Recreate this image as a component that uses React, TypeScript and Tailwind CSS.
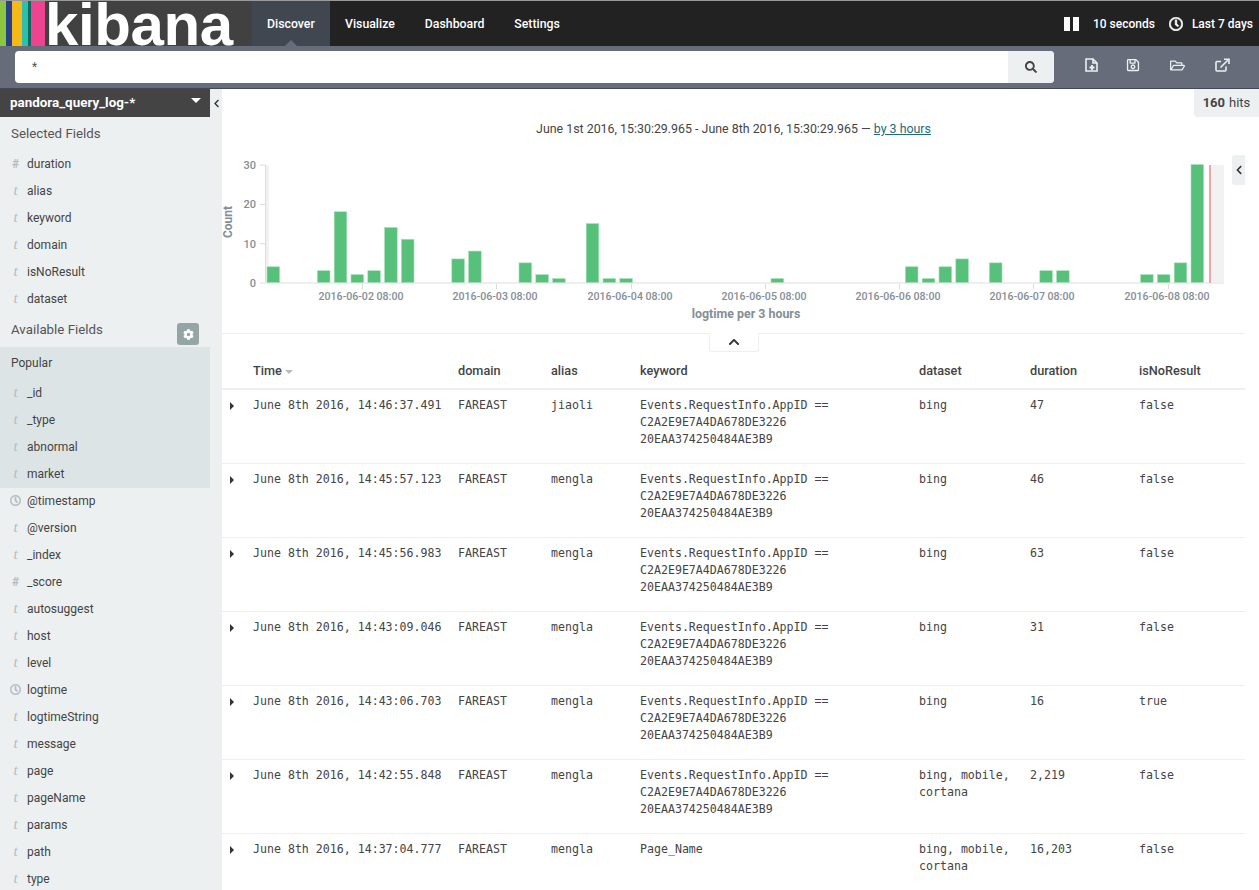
import React from 'react';
import {
  FaChevronLeft,
  FaChevronUp,
  FaCog,
  FaRegClock,
  FaRegFolderOpen,
  FaRegSave,
  FaSearch,
} from 'react-icons/fa';

const KEY = ['Events.RequestInfo.AppID ==', 'C2A2E9E7A4DA678DE3226', '20EAA374250484AE3B9'];

const rows = [
  { time: 'June 8th 2016, 14:46:37.491', alias: 'jiaoli', keyword: KEY, dataset: ['bing'], duration: '47', none: 'false' },
  { time: 'June 8th 2016, 14:45:57.123', alias: 'mengla', keyword: KEY, dataset: ['bing'], duration: '46', none: 'false' },
  { time: 'June 8th 2016, 14:45:56.983', alias: 'mengla', keyword: KEY, dataset: ['bing'], duration: '63', none: 'false' },
  { time: 'June 8th 2016, 14:43:09.046', alias: 'mengla', keyword: KEY, dataset: ['bing'], duration: '31', none: 'false' },
  { time: 'June 8th 2016, 14:43:06.703', alias: 'mengla', keyword: KEY, dataset: ['bing'], duration: '16', none: 'true' },
  { time: 'June 8th 2016, 14:42:55.848', alias: 'mengla', keyword: KEY, dataset: ['bing, mobile,', 'cortana'], duration: '2,219', none: 'false' },
  { time: 'June 8th 2016, 14:37:04.777', alias: 'mengla', keyword: ['Page_Name'], dataset: ['bing, mobile,', 'cortana'], duration: '16,203', none: 'false' },
];

const selected = [
  ['#', 'duration'],
  ['t', 'alias'],
  ['t', 'keyword'],
  ['t', 'domain'],
  ['t', 'isNoResult'],
  ['t', 'dataset'],
];
const popular = [
  ['t', '_id'],
  ['t', '_type'],
  ['t', 'abnormal'],
  ['t', 'market'],
];
const available = [
  ['c', '@timestamp'],
  ['t', '@version'],
  ['t', '_index'],
  ['#', '_score'],
  ['t', 'autosuggest'],
  ['t', 'host'],
  ['t', 'level'],
  ['c', 'logtime'],
  ['t', 'logtimeString'],
  ['t', 'message'],
  ['t', 'page'],
  ['t', 'pageName'],
  ['t', 'params'],
  ['t', 'path'],
  ['t', 'type'],
];

// bucket index -> count
const buckets: [number, number][] = [
  [0, 4], [3, 3], [4, 18], [5, 2], [6, 3], [7, 14], [8, 11], [11, 6], [12, 8], [15, 5], [16, 2], [17, 1],
  [19, 15], [20, 1], [21, 1], [30, 1], [38, 4], [39, 1], [40, 4], [41, 6], [43, 5], [46, 3], [47, 3],
  [52, 2], [53, 2], [54, 5], [55, 30],
];
const ticks: [number, string][] = [
  [362, '2016-06-02 08:00'],
  [496, '2016-06-03 08:00'],
  [631, '2016-06-04 08:00'],
  [765, '2016-06-05 08:00'],
  [899, '2016-06-06 08:00'],
  [1033, '2016-06-07 08:00'],
  [1168, '2016-06-08 08:00'],
];

function Field({ type, name }: { type: string; name: string }) {
  return (
    <div className="flex h-[27px] items-center">
      <span className="flex w-[27px] shrink-0 justify-center pl-[5px] pr-[1px] text-[#b4bcc2]">
        {type === 'c' && <FaRegClock className="text-[11px]" strokeWidth={24} />}
        {type === '#' && <span className="text-[12px] font-bold">#</span>}
        {type === 't' && <span className="font-['Liberation_Serif',serif] text-[15px] italic">t</span>}
      </span>
      <span>{name}</span>
    </div>
  );
}

function Sidebar() {
  return (
    <aside className="w-[222px] shrink-0 bg-[#ecf0f1] text-[12px] text-[#444444]">
      <div className="flex">
        <div className="flex h-[28px] w-[210px] items-center justify-between bg-[#444444] pl-[10px] pr-[9px] text-[13.4px] font-bold text-white">
          <span>pandora_query_log-*</span>
          <span className="mb-[5px] h-0 w-0 border-x-[5px] border-t-[5px] border-x-transparent border-t-white" />
        </div>
        <div className="flex flex-1 items-center justify-center">
          <FaChevronLeft className="text-[9px] text-[#333333]" />
        </div>
      </div>
      <div className="flex h-[33px] items-center pl-[11px] text-[13.3px] text-[#555555]">Selected Fields</div>
      {selected.map(([t, n]) => (
        <Field key={n} type={t} name={n} />
      ))}
      <div className="flex h-[35px] w-[210px] items-center justify-between pl-[11px] pr-[11px] text-[13.3px] text-[#555555]">
        <span>Available Fields</span>
        <span className="mt-[9px] flex h-[22px] w-[22px] items-center justify-center rounded-[3px] bg-[#95a5a6] text-[11px] text-white">
          <FaCog />
        </span>
      </div>
      <div className="w-[210px] bg-[#dde4e6] pb-[1px]">
        <div className="flex h-[32px] items-center pb-px pl-[11px]">Popular</div>
        {popular.map(([t, n]) => (
          <Field key={n} type={t} name={n} />
        ))}
      </div>
      <div className="-mt-px">
        {available.map(([t, n]) => (
          <Field key={n} type={t} name={n} />
        ))}
      </div>
    </aside>
  );
}

function Chart() {
  const toY = (v: number) => 282.5 - v * 3.93;
  return (
    <svg width="1037" height="192" viewBox="222 141 1037 192" className="block font-['Roboto',sans-serif]">
      <rect x="1211" y="165" width="13" height="118" fill="#f2f2f2" />
      <rect x="266" y="165" width="3" height="118" fill="#f2f2f2" />
      <rect x="265" y="165" width="1" height="118" fill="#dddddd" />
      {[30, 20, 10, 0].map((v) => (
        <g key={v}>
          <rect x="260" y={toY(v)} width="6" height="1" fill="#dddddd" />
          <text x="256" y={toY(v) + 4.5} textAnchor="end" fontSize="11" fontWeight="500" fill="#848e96">
            {v}
          </text>
        </g>
      ))}
      <rect x="265" y="282" width="959" height="2" fill="#eeeeee" />
      {ticks.map(([x, label]) => (
        <g key={label}>
          <rect x={x} y="284" width="1" height="5" fill="#dddddd" />
          <text x={x - 1} y="300" textAnchor="middle" fontSize="10.6" fontWeight="500" fill="#848e96">
            {label}
          </text>
        </g>
      ))}
      {buckets.map(([i, v]) => (
        <rect
          key={i}
          x={267 + i * 16.8}
          y={toY(v)}
          width="12.6"
          height={v * 3.93}
          fill="#57c17b"
          stroke="#a5e0b9"
          strokeWidth="0.6"
        />
      ))}
      <rect x="1209" y="165" width="2" height="118" fill="#e9a9a9" />
      <text
        transform="translate(232 222) rotate(-90)"
        textAnchor="middle"
        fontSize="12"
        fontWeight="700"
        fill="#848e96"
      >
        Count
      </text>
      <text x="746" y="318" textAnchor="middle" fontSize="12.4" fontWeight="700" fill="#848e96">
        logtime per 3 hours
      </text>
    </svg>
  );
}

const COLS = 'grid grid-cols-[31px_205px_93px_89px_279px_111px_109px_1fr]';

function DocTable() {
  return (
    <div className="mr-[14px] text-[#333333]">
      <div className={`${COLS} h-[56px] items-center border-b-2 border-[#ecf0f1] pt-[20px] text-[12.7px] font-medium text-[#444444]`}>
        <span />
        <span className="flex items-center gap-[3px]">
          Time
          <span className="mt-[3px] h-0 w-0 border-x-[4px] border-t-[4px] border-x-transparent border-t-[#b4bcc2]" />
        </span>
        <span>domain</span>
        <span>alias</span>
        <span>keyword</span>
        <span>dataset</span>
        <span>duration</span>
        <span>isNoResult</span>
      </div>
      {rows.map((r) => (
        <div
          key={r.time}
          className={`${COLS} h-[74px] border-b border-[#ecf0f1] pt-[7px] font-['DejaVu_Sans_Mono',monospace] text-[11.6px] leading-[17px] text-[#444444]`}
        >
          <span className="flex h-[17px] items-center pl-[8px]">
            <span className="h-0 w-0 border-y-[4px] border-l-[4px] border-y-transparent border-l-[#333333]" />
          </span>
          <span>{r.time}</span>
          <span>FAREAST</span>
          <span>{r.alias}</span>
          <span>
            {r.keyword.map((k) => (
              <div key={k}>{k}</div>
            ))}
          </span>
          <span>
            {r.dataset.map((k) => (
              <div key={k}>{k}</div>
            ))}
          </span>
          <span>{r.duration}</span>
          <span>{r.none}</span>
        </div>
      ))}
    </div>
  );
}

export default function App() {
  return (
    <div className="flex h-screen flex-col overflow-hidden bg-white font-['Roboto',sans-serif]">
      {/* top nav */}
      <nav className="flex h-[46px] shrink-0 border-t border-[#999999] bg-[#222222] text-[12px] font-medium text-white">
        <div className="flex w-[252px] overflow-hidden bg-[#414141]">
          <span className="w-[6px] bg-[#8cc63f]" />
          <span className="w-[6px] bg-[#27408b]" />
          <span className="w-[10px] bg-[#f5b91a]" />
          <span className="w-[6px] bg-[#2fbfae]" />
          <span className="w-[3px] bg-[#0e6b5c]" />
          <span className="w-[14px] bg-[#ee4490]" />
          <span className="font-['Liberation_Sans',sans-serif] text-[60px] font-bold leading-[48px] tracking-[-0.4px] text-white">
            kibana
          </span>
        </div>
        <div className="relative flex w-[78px] items-center bg-[#414751] pl-[15px] pt-px text-[12.3px]">
          Discover
          <span className="absolute bottom-0 left-[33px] h-0 w-0 border-x-[6px] border-b-[6px] border-x-transparent border-b-[#676c7b]" />
        </div>
        <div className="flex items-center px-[15px] pt-px text-[12.3px]">Visualize</div>
        <div className="flex items-center px-[15px] pt-px text-[12.3px]">Dashboard</div>
        <div className="flex items-center px-[15px] pt-px text-[12.3px]">Settings</div>
        <div className="ml-auto flex items-center pr-[6px]">
          <span className="flex gap-[3px]">
            <span className="h-[14px] w-[6px] bg-white" />
            <span className="h-[14px] w-[6px] bg-white" />
          </span>
          <span className="ml-[14px]">10 seconds</span>
          <FaRegClock className="ml-[14px] text-[14px]" strokeWidth={24} />
          <span className="ml-[9px]">Last 7 days</span>
        </div>
      </nav>

      {/* search bar */}
      <div className="flex h-[43px] shrink-0 items-start border-b border-[#444a55] bg-[#676c7b] pl-[15px] pt-[5px] text-[#ecf0f1]">
        <div className="flex h-[32px] w-[1039px] overflow-hidden rounded-[4px] bg-white">
          <div className="flex-1 pl-[17px] pt-[7px] text-[12px] text-[#555555]">*</div>
          <div className="flex w-[46px] items-center justify-center bg-[#ecf0f1] text-[12px] text-[#444444]">
            <FaSearch />
          </div>
        </div>
        <div className="flex h-[28px] items-center text-[14px]">
          <svg className="ml-[31px]" width="13" height="14" viewBox="0 0 13 14" fill="none" stroke="#ecf0f1" strokeWidth="1.6">
            <path d="M1 1h7l4 4v8H1z" />
            <path d="M8 1v4h4" />
            <path d="M7 7v5M4.500 9.500h5" strokeWidth="1.800" />
          </svg>
          <FaRegSave className="ml-[28px] text-[14px]" />
          <FaRegFolderOpen className="ml-[30px] text-[15px]" />
          <svg className="ml-[30px]" width="15" height="14" viewBox="0 0 15 14" fill="none" stroke="#ecf0f1" strokeWidth="1.600">
            <path d="M11 8.500V12a1 1 0 0 1-1 1H2a1 1 0 0 1-1-1V4.500a1 1 0 0 1 1-1h4" />
            <path d="M5.500 9.500 13 2" />
            <path d="M9 1.200h5v4.800" />
          </svg>
        </div>
      </div>

      <div className="flex min-h-0 flex-1">
        <Sidebar />
        <main className="relative min-w-0 flex-1">
          <div className="flex h-[28px] justify-end">
            <div className="flex w-[65px] items-center justify-center rounded-bl-[4px] bg-[#ecf0f1] text-[13px] text-[#444444]">
              <b className="mr-[4px] font-bold">160</b> hits
            </div>
          </div>
          <div className="mr-[14px] h-[24px] pt-[4px] text-center text-[12.4px] leading-[16px] text-[#444444]">
            June 1st 2016, 15:30:29.965 - June 8th 2016, 15:30:29.965 — <span className="text-[#1f6b7a] underline">by 3 hours</span>
          </div>
          <Chart />
          <div className="mr-[14px] border-t border-[#ecf0f1]" />
          <DocTable />

          {/* overlays */}
          <div className="absolute left-[1010px] top-[66px] flex h-[30px] w-[13px] items-center justify-center rounded-l-[3px] bg-[#ecf0f1]">
            <FaChevronLeft className="text-[10px] text-[#333333]" />
          </div>
          <div className="absolute left-[487px] top-[244px] flex h-[19px] w-[50px] items-center justify-center rounded-b-[3px] border border-t-0 border-[#ecf0f1] bg-white">
            <FaChevronUp className="text-[12px] text-[#333333]" />
          </div>
        </main>
      </div>
    </div>
  );
}
